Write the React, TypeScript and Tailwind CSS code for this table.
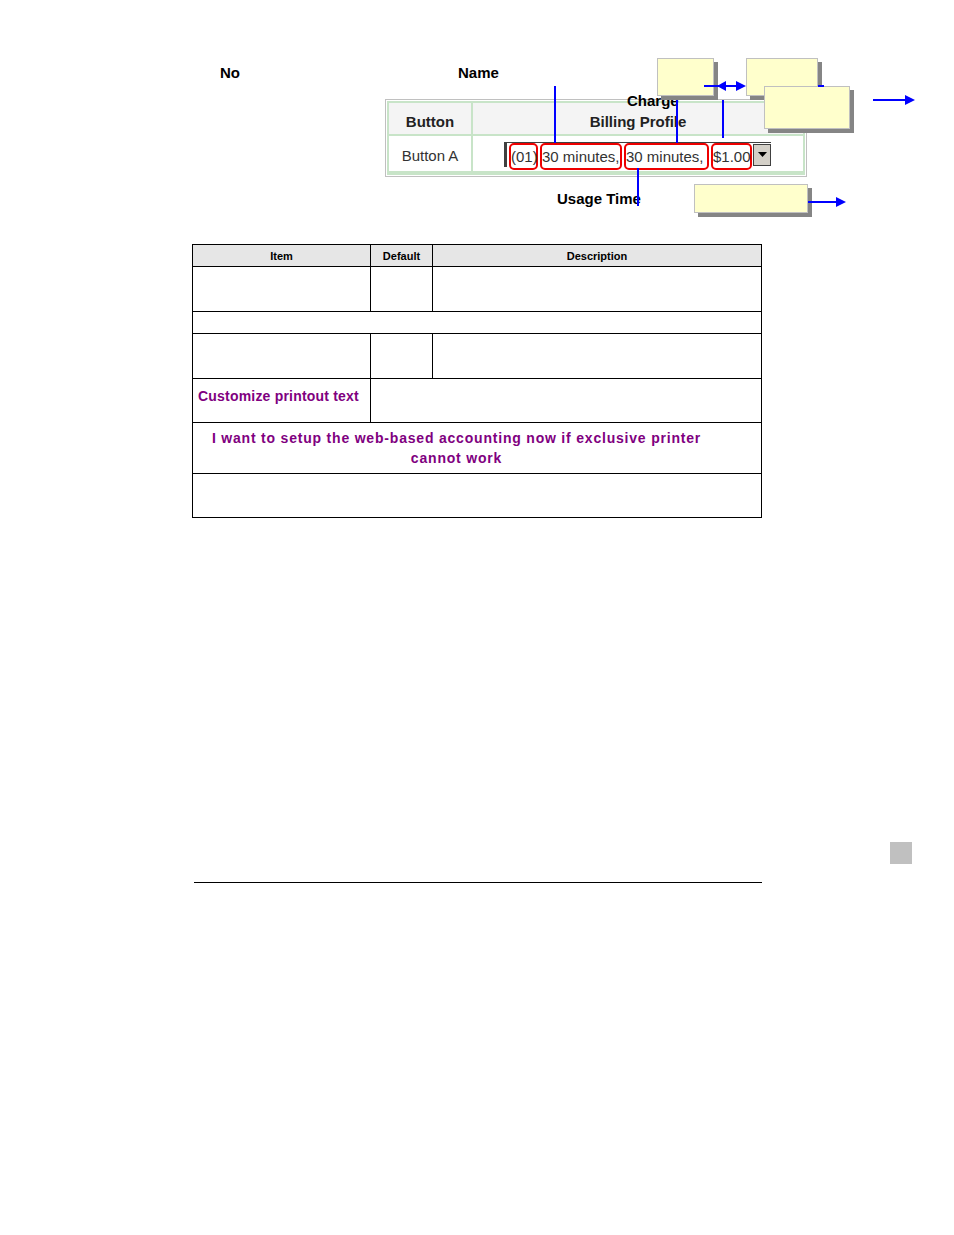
import React from 'react';

const font = { fontFamily: '"Liberation Sans", Arial, sans-serif' };

const callouts = [
  { left: 657, top: 58, w: 57, h: 38 },
  { left: 746, top: 58, w: 72, h: 38 },
  { left: 764, top: 86, w: 86, h: 43 },
  { left: 694, top: 184, w: 114, h: 29 },
];

const pieces = [
  { text: '(01)', w: 29 },
  { text: '30 minutes,', w: 82 },
  { text: '30 minutes,', w: 85 },
  { text: '$1.00', w: 41 },
];

function Callout({ left, top, w, h }: { left: number; top: number; w: number; h: number }) {
  return (
    <div className="absolute" style={{ left, top, width: w, height: h }}>
      <div className="absolute left-[4px] top-[4px] w-full h-full bg-[#858585]" />
      <div className="absolute inset-0 bg-[#ffffcc] border border-[#c0c0c0]" />
    </div>
  );
}

function Arrow({ left, top, w }: { left: number; top: number; w: number }) {
  return (
    <svg className="absolute" style={{ left, top: top - 5, width: w, height: 10 }} viewBox={`0 0 ${w} 10`}>
      <line x1="0" y1="5" x2={w - 8} y2="5" stroke="#0000ff" strokeWidth="2" />
      <polygon points={`${w - 10},0 ${w},5 ${w - 10},10`} fill="#0000ff" />
    </svg>
  );
}

function Screenshot() {
  return (
    <div className="absolute left-[385px] top-[99px] w-[422px] h-[78px] border border-[#c0c0c0] bg-white p-[1px]">
      <div className="border-2 border-[#c8e4c8] h-full flex flex-col">
        <div className="flex h-[33px] bg-[#f4f4f4] border-b-2 border-[#c8e4c8]">
          <div className="w-[84px] flex items-center justify-center pt-[7px] border-r-2 border-[#c8e4c8] font-bold text-[15px] text-[#222]">
            Button
          </div>
          <div className="flex-1 flex items-center justify-center pt-[7px] font-bold text-[15px] text-[#222]">
            Billing Profile
          </div>
        </div>
        <div className="flex flex-1 border-b-2 border-[#c8e4c8]">
          <div className="w-[84px] flex items-center justify-center pt-[5px] border-r-2 border-[#c8e4c8] text-[15px] text-[#333]">
            Button A
          </div>
          <div className="flex-1 flex items-center pl-[31px] pt-[2px]">
            <div className="flex items-center h-[25px] border-l-[3px] border-t border-[#404040] bg-white">
              {pieces.map((p, i) => (
                <div
                  key={i}
                  className="h-[27px] mt-[3px] ml-[2px] border-2 border-[#ee0000] rounded-[5px] flex items-start text-[15px] leading-[23px] text-[#333] whitespace-nowrap"
                  style={{ width: p.w }}
                >
                  {p.text}
                </div>
              ))}
              <div className="ml-[1px] w-[18px] h-[22px] bg-[#d4d0c8] border border-[#404040] flex items-center justify-center">
                <svg width="9" height="6" viewBox="0 0 9 6">
                  <polygon points="0,0 9,0 4.5,5" fill="#000" />
                </svg>
              </div>
            </div>
          </div>
        </div>
      </div>
    </div>
  );
}

function Figure() {
  return (
    <div className="relative h-[244px]">
      <span className="absolute left-[220px] top-[62px] font-bold text-[15px] text-black">No</span>
      <span className="absolute left-[458px] top-[62px] font-bold text-[15px] text-black">Name</span>
      <Screenshot />
      <span className="absolute left-[627px] top-[90px] font-bold text-[15px] text-black">Charge</span>
      <span className="absolute left-[557px] top-[188px] font-bold text-[15px] text-black">Usage Time</span>

      {/* connector lines */}
      <div className="absolute left-[554px] top-[86px] w-[2px] h-[57px] bg-[#0000ff]" />
      <div className="absolute left-[676px] top-[96px] w-[2px] h-[47px] bg-[#0000ff]" />
      <div className="absolute left-[722px] top-[100px] w-[2px] h-[38px] bg-[#0000ff]" />
      <div className="absolute left-[637px] top-[168px] w-[2px] h-[38px] bg-[#0000ff]" />

      {callouts.map((c, i) => (
        <Callout key={i} {...c} />
      ))}

      <svg className="absolute left-[704px] top-[81px] w-[43px] h-[10px]" viewBox="0 0 43 10">
        <line x1="0" y1="5" x2="40" y2="5" stroke="#0000ff" strokeWidth="2" />
        <polygon points="12,0 3,5 12,10" fill="#0000ff" transform="translate(10,0)" />
        <polygon points="32,0 42,5 32,10" fill="#0000ff" />
      </svg>
      <div className="absolute left-[818px] top-[85px] w-[6px] h-[2px] bg-[#0000ff]" />
      <Arrow left={873} top={100} w={42} />
      <Arrow left={808} top={202} w={38} />
    </div>
  );
}

function Table() {
  const purple = 'text-[#800080] font-bold text-[14px]';
  return (
    <table className="ml-[192px] w-[570px] border-collapse border border-black table-fixed">
      <colgroup>
        <col className="w-[178px]" />
        <col className="w-[62px]" />
        <col />
      </colgroup>
      <thead>
        <tr className="h-[22px] bg-[#e6e6e6]">
          <th className="border border-black font-bold text-[11px] pt-[1px]">Item</th>
          <th className="border border-black font-bold text-[11px] pt-[1px]">Default</th>
          <th className="border border-black font-bold text-[11px] pt-[1px]">Description</th>
        </tr>
      </thead>
      <tbody>
        <tr className="h-[45px]">
          <td className="border border-black" />
          <td className="border border-black" />
          <td className="border border-black" />
        </tr>
        <tr className="h-[22px]">
          <td colSpan={3} className="border border-black" />
        </tr>
        <tr className="h-[45px]">
          <td className="border border-black" />
          <td className="border border-black" />
          <td className="border border-black" />
        </tr>
        <tr className="h-[44px]">
          <td className={`border border-black align-top px-[5px] pt-[7px] whitespace-nowrap tracking-[0.2px] ${purple}`}>
            Customize printout text
          </td>
          <td colSpan={2} className="border border-black" />
        </tr>
        <tr className="h-[51px]">
          <td colSpan={3} className={`border border-black text-center pr-[45px] pl-[4px] leading-[20px] tracking-[0.8px] ${purple}`}>
            I want to setup the web-based accounting now if exclusive printer
            <br />
            cannot work
          </td>
        </tr>
        <tr className="h-[44px]">
          <td colSpan={3} className="border border-black" />
        </tr>
      </tbody>
    </table>
  );
}

export default function App() {
  return (
    <div className="w-[954px] h-[1235px] bg-white text-black" style={font}>
      <Figure />
      <Table />
      <div className="flex justify-end pr-[42px] mt-[324px]">
        <div className="w-[22px] h-[22px] bg-[#c0c0c0]" />
      </div>
      <div className="ml-[194px] mt-[18px] w-[568px] h-px bg-black" />
    </div>
  );
}
